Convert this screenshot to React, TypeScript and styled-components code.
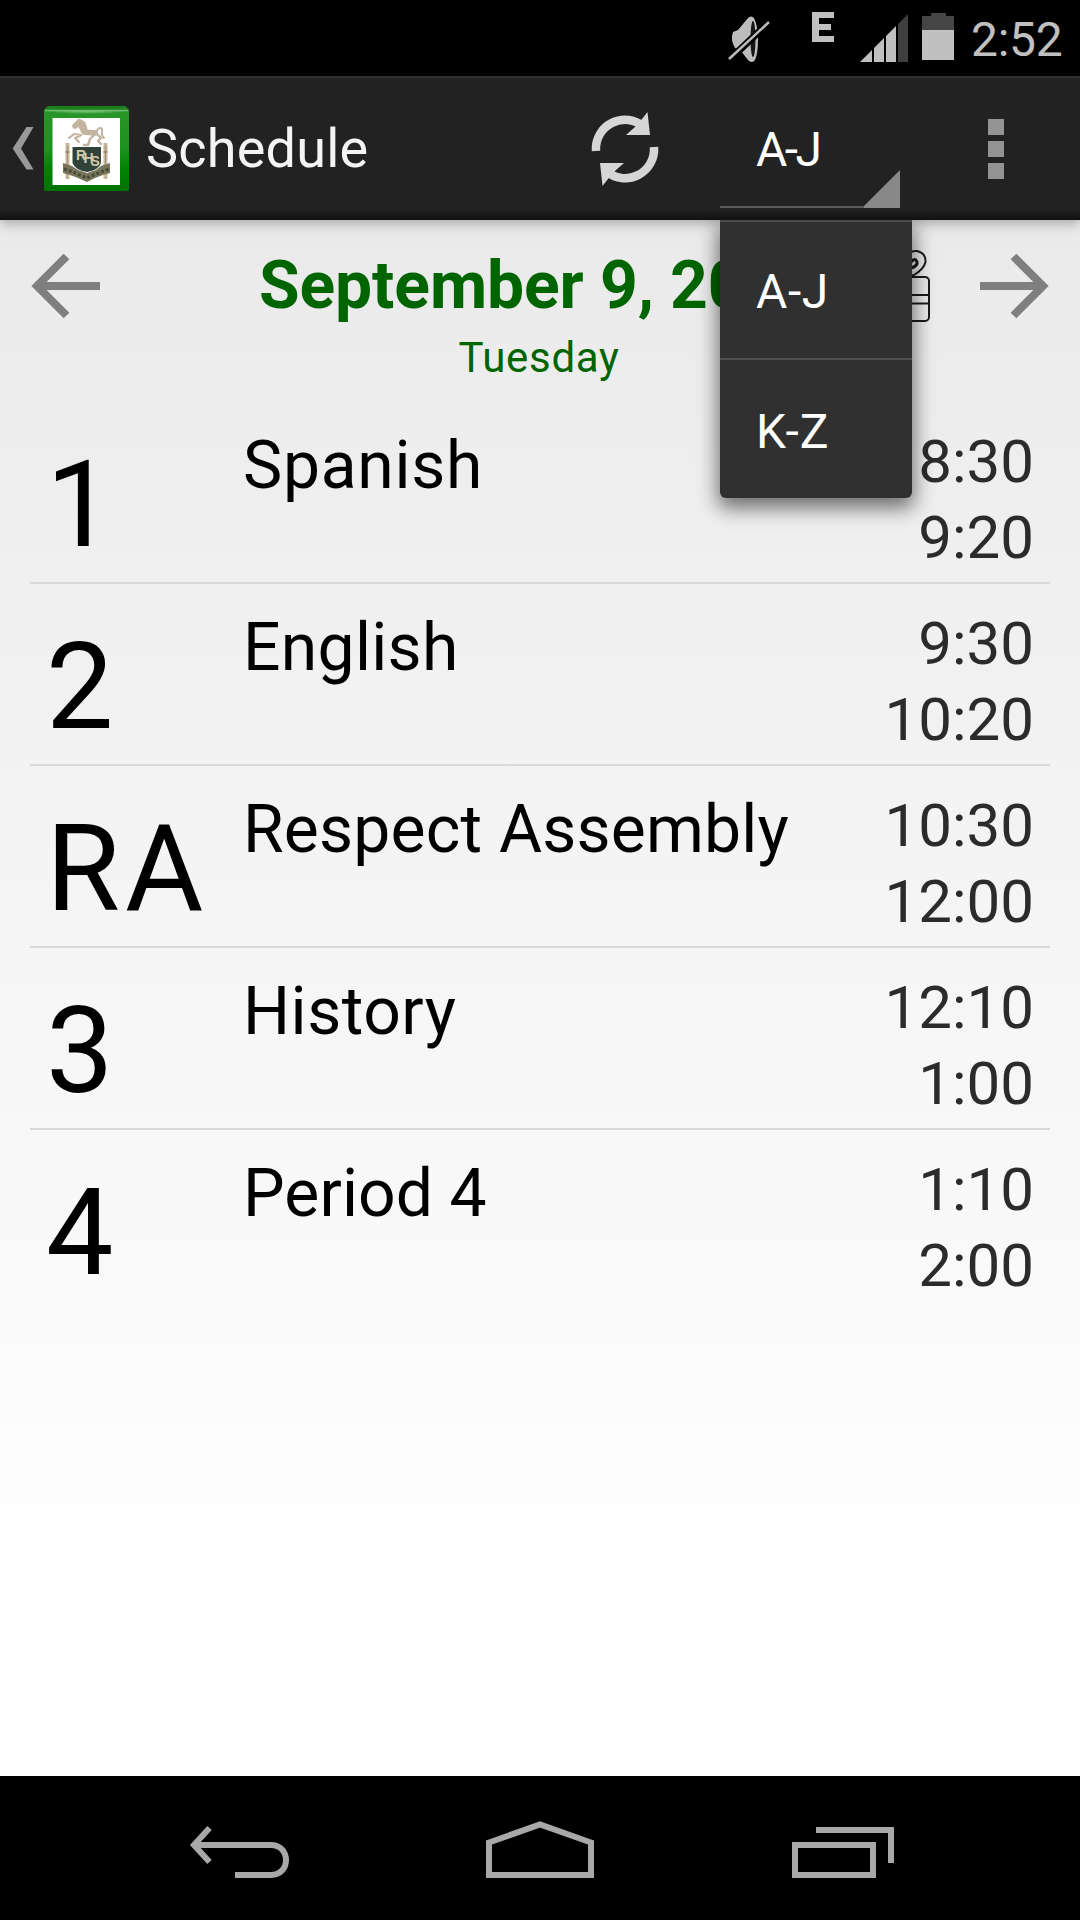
import React from "react";
import styled, { createGlobalStyle } from "styled-components";

const Global = createGlobalStyle`
  * { box-sizing: border-box; }
  body { margin: 0; background: #000; font-family: Roboto, sans-serif; }
`;

const Screen = styled.div`
  width: 1080px;
  height: 1920px;
  display: flex;
  flex-direction: column;
  background: #000;
  overflow: hidden;
`;

const StatusBar = styled.header`
  height: 76px;
  flex: none;
  display: flex;
  align-items: flex-start;
  justify-content: flex-end;
  padding-right: 17px;
`;

const StatusIcons = styled.svg`
  width: 240px;
  height: 75px;
  margin-right: 6px;
`;

const Clock = styled.span`
  width: 92px;
  padding-top: 12px;
  font-size: 48px;
  line-height: 56px;
  letter-spacing: -0.3px;
  color: #c0c0c0;
  white-space: nowrap;
`;

const ActionBar = styled.div`
  height: 144px;
  flex: none;
  display: flex;
  align-items: center;
  position: relative;
  z-index: 2;
  background: linear-gradient(#222 0 92%, #151515 98%, #111);
  border-top: 2px solid #2f2f2f;
  box-shadow: 0 3px 12px rgba(0, 0, 0, 0.3);
`;

const UpIcon = styled.svg`
  width: 44px;
  height: 142px;
  flex: none;
`;

const Logo = styled.svg`
  width: 85px;
  height: 85px;
  flex: none;
  margin-bottom: 2px;
`;

const Title = styled.h1`
  margin: 0 0 0 17px;
  width: 442px;
  font-size: 54px;
  font-weight: 400;
  line-height: 64px;
  letter-spacing: 0.2px;
  color: #f4f4f4;
`;

const RefreshIcon = styled.svg`
  width: 76px;
  height: 76px;
  flex: none;
`;

const Spinner = styled.div`
  position: relative;
  width: 180px;
  height: 142px;
  margin-left: 56px;
  flex: none;
`;

const SpinnerFace = styled.div`
  display: flex;
  align-items: flex-end;
  width: 180px;
  height: 130px;
  border-bottom: 2px solid #5a5a5a;
`;

const SpinnerText = styled.span<{ $spacing: number }>`
  flex: 1;
  padding-left: 36px;
  line-height: 56px;
  font-size: 48px;
  letter-spacing: ${(p) => p.$spacing}px;
  color: #fff;
  white-space: nowrap;
`;

const SpinnerValue = styled(SpinnerText)`
  align-self: center;
  padding-top: 15px;
`;

const Corner = styled.svg`
  width: 36px;
  height: 38px;
  flex: none;
  margin-bottom: -2px;
`;

const Menu = styled.div`
  position: absolute;
  top: 142px;
  left: 0;
  width: 192px;
  height: 278px;
  display: flex;
  flex-direction: column;
  background: #303030;
  border-top: 2px solid #4a4a4a;
  border-radius: 0 0 6px 6px;
  box-shadow: 0 8px 20px 2px rgba(0, 0, 0, 0.55);
  clip-path: inset(0 -40px -50px -40px);
`;

const MenuItem = styled.div<{ $divider?: boolean }>`
  height: 138px;
  display: flex;
  align-items: center;
  padding-top: ${(p) => (p.$divider ? 4 : 6)}px;
  border-bottom: ${(p) => (p.$divider ? "2px solid #505050" : "none")};
`;

const Overflow = styled.div`
  display: flex;
  flex-direction: column;
  gap: 6px;
  margin: -1px 0 0 88px;
`;

const Dot = styled.i`
  width: 16px;
  height: 16px;
  background: #939393;
`;

const Content = styled.main`
  flex: 1;
  background: linear-gradient(#eaeaea, #ededed 12%, #f0f0f0 24%, #f3f3f3 37%, #f6f6f6 50%, #fafafa 70%, #fff 86%);
`;

const DateBar = styled.section`
  height: 182px;
  display: grid;
  grid-template-columns: 132px 1fr 132px;
`;

const DateBlock = styled.div`
  display: flex;
  flex-direction: column;
  align-items: center;
  padding-top: 27px;
  color: #006400;
`;

const DateRow = styled.div`
  display: flex;
  align-self: flex-start;
  margin-left: 127px;
  width: 678px;
  height: 78px;
`;

const DateText = styled.h2`
  margin: 0;
  width: 598px;
  font-size: 66px;
  line-height: 78px;
  font-weight: 700;
  letter-spacing: -0.1px;
  white-space: nowrap;
`;

const Gift = styled.svg`
  width: 80px;
  height: 78px;
  flex: none;
`;

const DayText = styled.div`
  font-size: 42px;
  line-height: 50px;
  letter-spacing: 0.7px;
  margin: 8px 2px 0 0;
`;

const ArrowIcon = styled.svg<{ $flip?: boolean }>`
  width: 132px;
  height: 132px;
  transform: ${(p) => (p.$flip ? "scaleX(-1)" : "none")};
`;

const List = styled.ul`
  margin: 0;
  padding: 0 30px;
  list-style: none;
`;

const Row = styled.li`
  height: 182px;
  display: grid;
  grid-template-columns: 213px 1fr auto;
  border-bottom: 2px solid #d9d9d9;
  &:last-child { border-bottom-color: transparent; }
`;

const Period = styled.span`
  padding: 43px 0 0 16px;
  font-size: 120px;
  line-height: 120px;
  letter-spacing: 5px;
  color: #000;
`;

const Subject = styled.span<{ $tracking: number }>`
  padding-top: 25px;
  font-size: 66px;
  line-height: 78px;
  letter-spacing: ${(p) => p.$tracking}px;
  color: #000;
`;

const Times = styled.div`
  display: flex;
  flex-direction: column;
  align-items: flex-end;
  padding: 22px 16px 0 0;
  font-size: 60px;
  line-height: 76px;
  color: #2b2b2b;
`;

const NavBar = styled.nav`
  height: 144px;
  flex: none;
  background: #000;
  display: flex;
  justify-content: center;
  gap: 140px;
`;

const NavIcon = styled.svg`
  width: 160px;
  height: 144px;
`;

const rows = [
  { period: "1", subject: "Spanish", tracking: 0.7, start: "8:30", end: "9:20" },
  { period: "2", subject: "English", tracking: 0.3, start: "9:30", end: "10:20" },
  { period: "RA", subject: "Respect Assembly", tracking: 0.2, start: "10:30", end: "12:00" },
  { period: "3", subject: "History", tracking: 0.5, start: "12:10", end: "1:00" },
  { period: "4", subject: "Period 4", tracking: 0.1, start: "1:10", end: "2:00" },
];

const Crest = () => (
  <Logo viewBox="0 0 85 85">
    <defs>
      <linearGradient id="frame" x1="0" y1="0" x2="0" y2="1">
        <stop offset="0" stopColor="#2a962a" />
        <stop offset=".5" stopColor="#1e911e" />
        <stop offset=".75" stopColor="#008300" />
        <stop offset="1" stopColor="#007200" />
      </linearGradient>
      <radialGradient id="shine" cx=".5" cy="0" r=".5">
        <stop offset="0" stopColor="#a5dca5" />
        <stop offset="1" stopColor="#a5dca5" stopOpacity="0" />
      </radialGradient>
    </defs>
    <path d="M4 0H81L85 4V85H0V4Z" fill="url(#frame)" />
    <path d="M4 0H81L85 4H0Z" fill="#1c7f1c" />
    <path d="M0 4H85V12H0Z" fill="url(#shine)" />
    <path d="M1 4.500H84" stroke="#6dba6d" strokeWidth="1.500" />
    <path d="M8.500 12H76V79H8.500Z" fill="#fff" />
    <g fill="none" stroke="#c3b4a0" strokeLinecap="round" strokeLinejoin="round">
      <path d="M31 20L35 16L40 26L51 27" strokeWidth="5.500" />
      <path d="M35 14L40 17L42 23" strokeWidth="3" />
      <path d="M37 29L30 28L25 32M36 30L31 32L35 36" strokeWidth="2.200" />
      <path d="M50 29L46 33L44 39H40" strokeWidth="2.400" />
      <path d="M53 28L57 32L54 35L57 38" strokeWidth="2.400" />
      <path d="M52 26L54 23Q59 20 58 26Q57 29 60 32" strokeWidth="2" />
    </g>
    <path d="M23.500 37V73M61.500 37V73" stroke="#c6b69b" strokeWidth="4" />
    <path d="M23.500 40V60M61.500 40V60" stroke="#a69274" strokeWidth="1" />
    <path d="M21.500 46H25.500M59.500 46H63.500" stroke="#8d7d62" strokeWidth="1.500" />
    <path d="M19 57L28 60L34 64L43 67L52 64L57 60L66 57V67L59 69L51 72L43 76L34 72L26 69L19 67Z" fill="#77745a" />
    <path d="M20 63L29 66L43 72L57 66L65 63" stroke="#454c39" strokeWidth="3" strokeDasharray="3 2" fill="none" />
    <path d="M28.500 41H57V57Q55 64 43 66Q31 64 28.500 57Z" fill="#304239" />
    <text y="54" fontFamily="Liberation Sans, sans-serif" fontWeight="700" fontSize="14" fill="#d3c9ac">
      <tspan x="32">R</tspan>
      <tspan x="39.500" y="57">H</tspan>
      <tspan x="46.500" y="59.500">S</tspan>
    </text>
  </Logo>
);

export default function App() {
  return (
    <Screen>
      <Global />
      <StatusBar>
        <StatusIcons viewBox="725 0 240 75">
          <path d="M733 32L738 30L748 18Q751 15 754 18Q758 26 758 39Q758 54 755 60Q752 64 748 60L741 51L735 48Q730 40 733 32Z" fill="#bcbcbc" />
          <ellipse cx="753" cy="39" rx="2.500" ry="18" fill="#151515" />
          <path d="M727 62L766 25" stroke="#000" strokeWidth="7" />
          <path d="M729 59L769 22" stroke="#bcbcbc" strokeWidth="2.500" />
          <path d="M812 12H834V18H819V24H831V30H819V36H834V42H812Z" fill="#c0c0c0" />
          <path d="M860 62L872 50V62ZM874 48L884 38V62H874ZM886 36L896 26V62H886Z" fill="#c0c0c0" />
          <path d="M898 24L908 14V62H898Z" fill="#3f3f3f" />
          <path d="M922 16H931V13H946V16H954V30H922Z" fill="#454545" />
          <path d="M922 30H954V60H922Z" fill="#c0c0c0" />
        </StatusIcons>
        <Clock>2:52</Clock>
      </StatusBar>

      <ActionBar>
        <UpIcon viewBox="0 78 44 142">
          <path d="M26.500 127H33.500L21 148.500L33.500 169.500H26.500L12.700 148.500Z" fill="#999" />
        </UpIcon>
        <Crest />
        <Title>Schedule</Title>
        <RefreshIcon viewBox="0 0 76 76">
          <g fill="none" stroke="#d6d6d6" strokeWidth="8.500">
            <path d="M8 40A29 29 0 0 1 56 16" />
            <path d="M66 36A29 29 0 0 1 18 60" />
          </g>
          <path d="M59.500 1L62 24H38L47 16L54 8ZM14.500 75L12 52H36L28 59L20 68Z" fill="#d6d6d6" />
        </RefreshIcon>
        <Spinner>
          <SpinnerFace>
            <SpinnerValue $spacing={-2.5}>A-J</SpinnerValue>
            <Corner viewBox="0 0 36 38"><path d="M36 0V38H0V36Z" fill="#888" /></Corner>
          </SpinnerFace>
          <Menu>
            <MenuItem $divider><SpinnerText $spacing={0.6}>A-J</SpinnerText></MenuItem>
            <MenuItem><SpinnerText $spacing={0.9}>K-Z</SpinnerText></MenuItem>
          </Menu>
        </Spinner>
        <Overflow><Dot /><Dot /><Dot /></Overflow>
      </ActionBar>

      <Content>
        <DateBar>
          <ArrowIcon viewBox="0 0 132 132">
            <path d="M100 66H38M66.500 36.500L37 66L66.500 95.500" stroke="#7f7f7f" strokeWidth="8" fill="none" />
          </ArrowIcon>
          <DateBlock>
            <DateRow>
              <DateText>September 9, 2014</DateText>
              <Gift viewBox="857 247 80 78" fill="none" stroke="#1a1a1a" strokeWidth="2">
                <rect x="881" y="277" width="48" height="44" rx="4" />
                <path d="M881 295H929M881 303.500H929" strokeWidth="2.200" />
                <path d="M905 276L896 273Q886 266 885 260Q886 251 895 251Q903 252 905 261Q908 250 917 251Q926 253 925.500 262Q924 269 914 275L905 276" />
                <path d="M911 262Q915 257 917 262Q918 266 911 268M899 262Q895 257 893 262Q892 266 899 268" strokeWidth="3" />
              </Gift>
            </DateRow>
            <DayText>Tuesday</DayText>
          </DateBlock>
          <ArrowIcon $flip viewBox="0 0 132 132">
            <path d="M100 66H38M66.500 36.500L37 66L66.500 95.500" stroke="#7f7f7f" strokeWidth="8" fill="none" />
          </ArrowIcon>
        </DateBar>
        <List>
          {rows.map((r) => (
            <Row key={r.period}>
              <Period>{r.period}</Period>
              <Subject $tracking={r.tracking}>{r.subject}</Subject>
              <Times><span>{r.start}</span><span>{r.end}</span></Times>
            </Row>
          ))}
        </List>
      </Content>

      <NavBar>
        <NavIcon viewBox="160 0 160 144" fill="none" stroke="#a8a8a8">
          <path d="M209.500 52L194 69L209.500 86" strokeWidth="6" />
          <path d="M196 69H271C291 69 291 99 271 99H235" strokeWidth="6" />
        </NavIcon>
        <NavIcon viewBox="460 0 160 144" fill="none" stroke="#a8a8a8" strokeWidth="6">
          <path d="M489 99V66.500L540 48.500L591 66.500V99Z" />
        </NavIcon>
        <NavIcon viewBox="760 0 160 144" fill="none" stroke="#a8a8a8" strokeWidth="6">
          <path d="M795 69H873V99H795Z" />
          <path d="M816 54H891V87" />
        </NavIcon>
      </NavBar>
    </Screen>
  );
}
